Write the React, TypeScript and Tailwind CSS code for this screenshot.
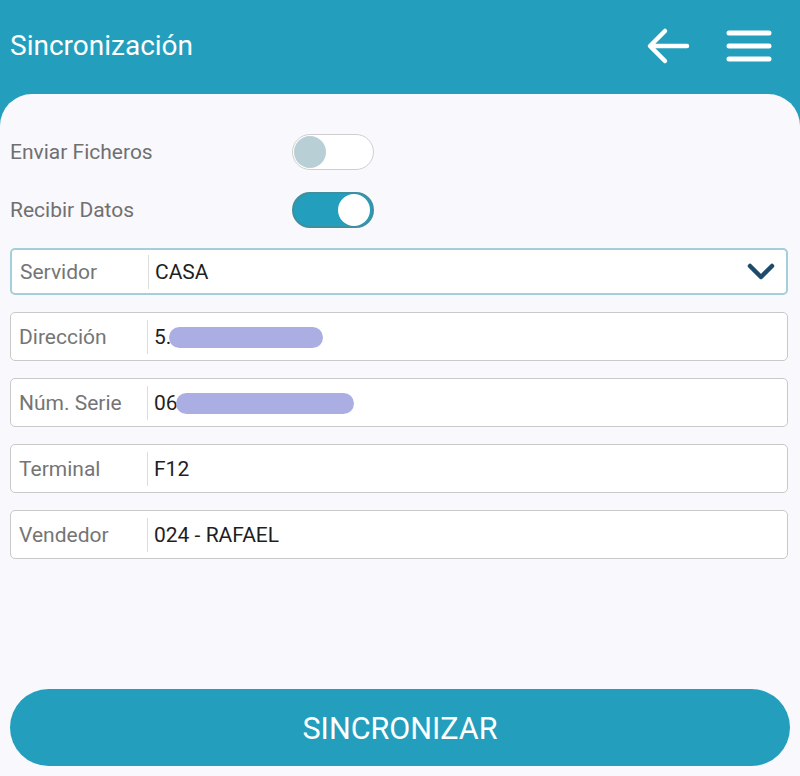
import React from "react";

function Toggle({ on }: { on: boolean }) {
  return on ? (
    <div className="w-[82px] h-[36px] rounded-full bg-[#239ebc] border-2 border-[#3f8f9f] flex items-center justify-end px-[2px]">
      <div className="w-[32px] h-[32px] rounded-full bg-white" />
    </div>
  ) : (
    <div className="w-[82px] h-[36px] rounded-full bg-white border border-[#cfcfcf] flex items-center justify-start px-[1px]">
      <div className="w-[32px] h-[32px] rounded-full bg-[#b9cfd6]" />
    </div>
  );
}

function Field({
  label,
  value,
  blob,
  select,
}: {
  label: string;
  value: string;
  blob?: number;
  select?: boolean;
}) {
  return (
    <div
      className={
        "flex items-center bg-white rounded-[5px] " +
        (select
          ? "h-[47px] border-2 border-[#a5cfd8]"
          : "h-[49px] border border-[#c9c9c9]")
      }
    >
      <div className="w-[137px] pl-[8px] pt-[2px] text-[21px] text-[#757575] border-r border-[#dcdcdc] h-[34px] flex items-center">
        {label}
      </div>
      <div className="flex-1 flex items-center pl-[6px] pt-[2px] text-[21px] text-[#1f1f1f]">
        <span>{value}</span>
        {blob ? (
          <span
            className="inline-block h-[21px] rounded-full bg-[#aaaee2] -ml-[2px]"
            style={{ width: blob }}
          />
        ) : null}
      </div>
      {select ? (
        <svg width="28" height="18" viewBox="0 0 28 18" className="mr-[11px]">
          <path
            d="M3 3 L14 14 L25 3"
            fill="none"
            stroke="#1e4a6b"
            strokeWidth="4.5"
            strokeLinecap="round"
            strokeLinejoin="round"
          />
        </svg>
      ) : null}
    </div>
  );
}

export default function App() {
  return (
    <div
      className="w-[800px] h-[776px] bg-[#239ebc] flex flex-col overflow-hidden"
      style={{ fontFamily: "Roboto, 'Noto Sans', sans-serif" }}
    >
      <div className="h-[94px] flex items-center justify-between pl-[10px] pr-[28px] pb-[2px]">
        <div className="text-white text-[28px]">Sincronización</div>
        <div className="flex items-center gap-[36px]">
          <svg width="44" height="38" viewBox="0 0 44 38">
            <path
              d="M41 19 H5 M19 4 L4 19 L19 34"
              fill="none"
              stroke="white"
              strokeWidth="4.5"
              strokeLinecap="round"
              strokeLinejoin="round"
            />
          </svg>
          <svg width="46" height="32" viewBox="0 0 46 32">
            <path
              d="M3 3 H43 M3 16 H43 M3 29 H43"
              fill="none"
              stroke="white"
              strokeWidth="5"
              strokeLinecap="round"
            />
          </svg>
        </div>
      </div>
      <div className="flex-1 bg-[#f9f8fd] rounded-t-[32px] flex flex-col px-[10px] pt-[40px] pb-[10px]">
        <div className="flex items-center h-[36px]">
          <div className="w-[282px] pt-[2px] text-[21px] text-[#707070]">Enviar Ficheros</div>
          <Toggle on={false} />
        </div>
        <div className="flex items-center h-[36px] mt-[22px]">
          <div className="w-[282px] pt-[2px] text-[21px] text-[#707070]">Recibir Datos</div>
          <Toggle on={true} />
        </div>
        <div className="flex flex-col gap-[17px] mt-[20px] pr-[2px]">
          <Field label="Servidor" value="CASA" select />
          <Field label="Dirección" value="5." blob={154} />
          <Field label="Núm. Serie" value="06" blob={178} />
          <Field label="Terminal" value="F12" />
          <Field label="Vendedor" value="024 - RAFAEL" />
        </div>
        <div className="flex-1" />
        <button className="h-[77px] w-[780px] rounded-full bg-[#239ebc] text-white text-[30.5px] flex items-center justify-center pt-[2px]">
          SINCRONIZAR
        </button>
      </div>
    </div>
  );
}
